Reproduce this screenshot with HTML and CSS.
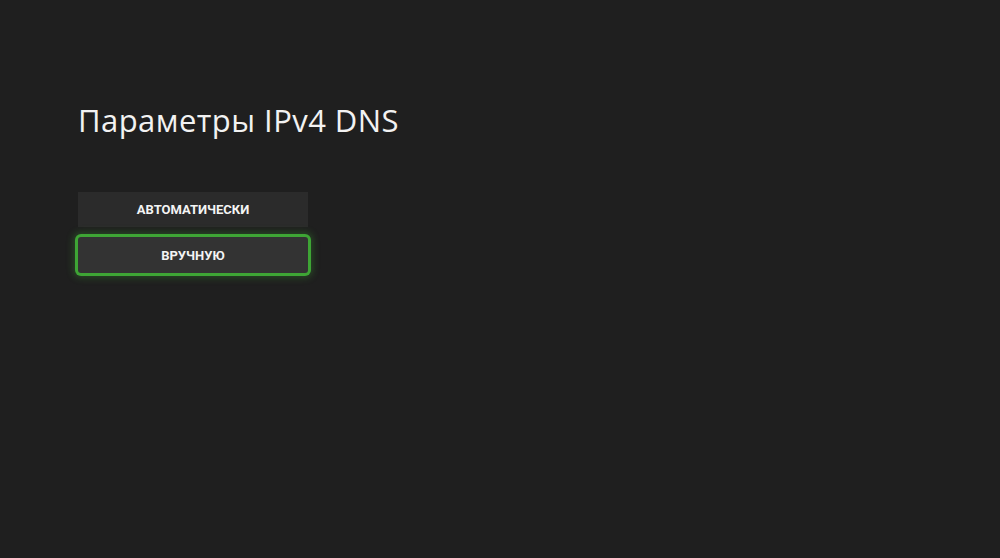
FILE: index.html
```html
<!DOCTYPE html>
<html lang="ru">
<head>
<meta charset="utf-8">
<link rel="stylesheet" href="styles.css">
</head>
<body>
<main class="page">
  <h1 class="title">Параметры IPv4 DNS</h1>
  <div class="options">
    <button class="option">АВТОМАТИЧЕСКИ</button>
    <button class="option focused">ВРУЧНУЮ</button>
  </div>
</main>
</body>
</html>
```

FILE: styles.css
```css
html, body {
  margin: 0;
  padding: 0;
  background: #1f1f1f;
  width: 1000px;
  height: 558px;
  overflow: hidden;
}
.page {
  padding: 98px 0 0 78px;
  font-family: "Open Sans", "Liberation Sans", sans-serif;
}
.title {
  margin: 0;
  font-weight: 400;
  font-size: 31px;
  line-height: 44px;
  color: #f2f2f2;
  letter-spacing: 0.45px;
}
.options {
  margin-top: 50px;
  display: flex;
  flex-direction: column;
  gap: 10px;
  width: 230px;
}
.option {
  display: block;
  width: 230px;
  height: 35px;
  padding: 0;
  border: none;
  background: #2b2b2b;
  color: #f4f4f4;
  font-family: "Roboto", "Liberation Sans", sans-serif;
  font-weight: 700;
  font-size: 13px;
  letter-spacing: 0;
  text-align: center;
}
.option.focused {
  background: #333333;
  height: 36px;
  box-shadow: 0 0 0 3px #3ea535, 0 0 7px 5px rgba(62,165,53,0.3);
  border-radius: 3px;
}
```
